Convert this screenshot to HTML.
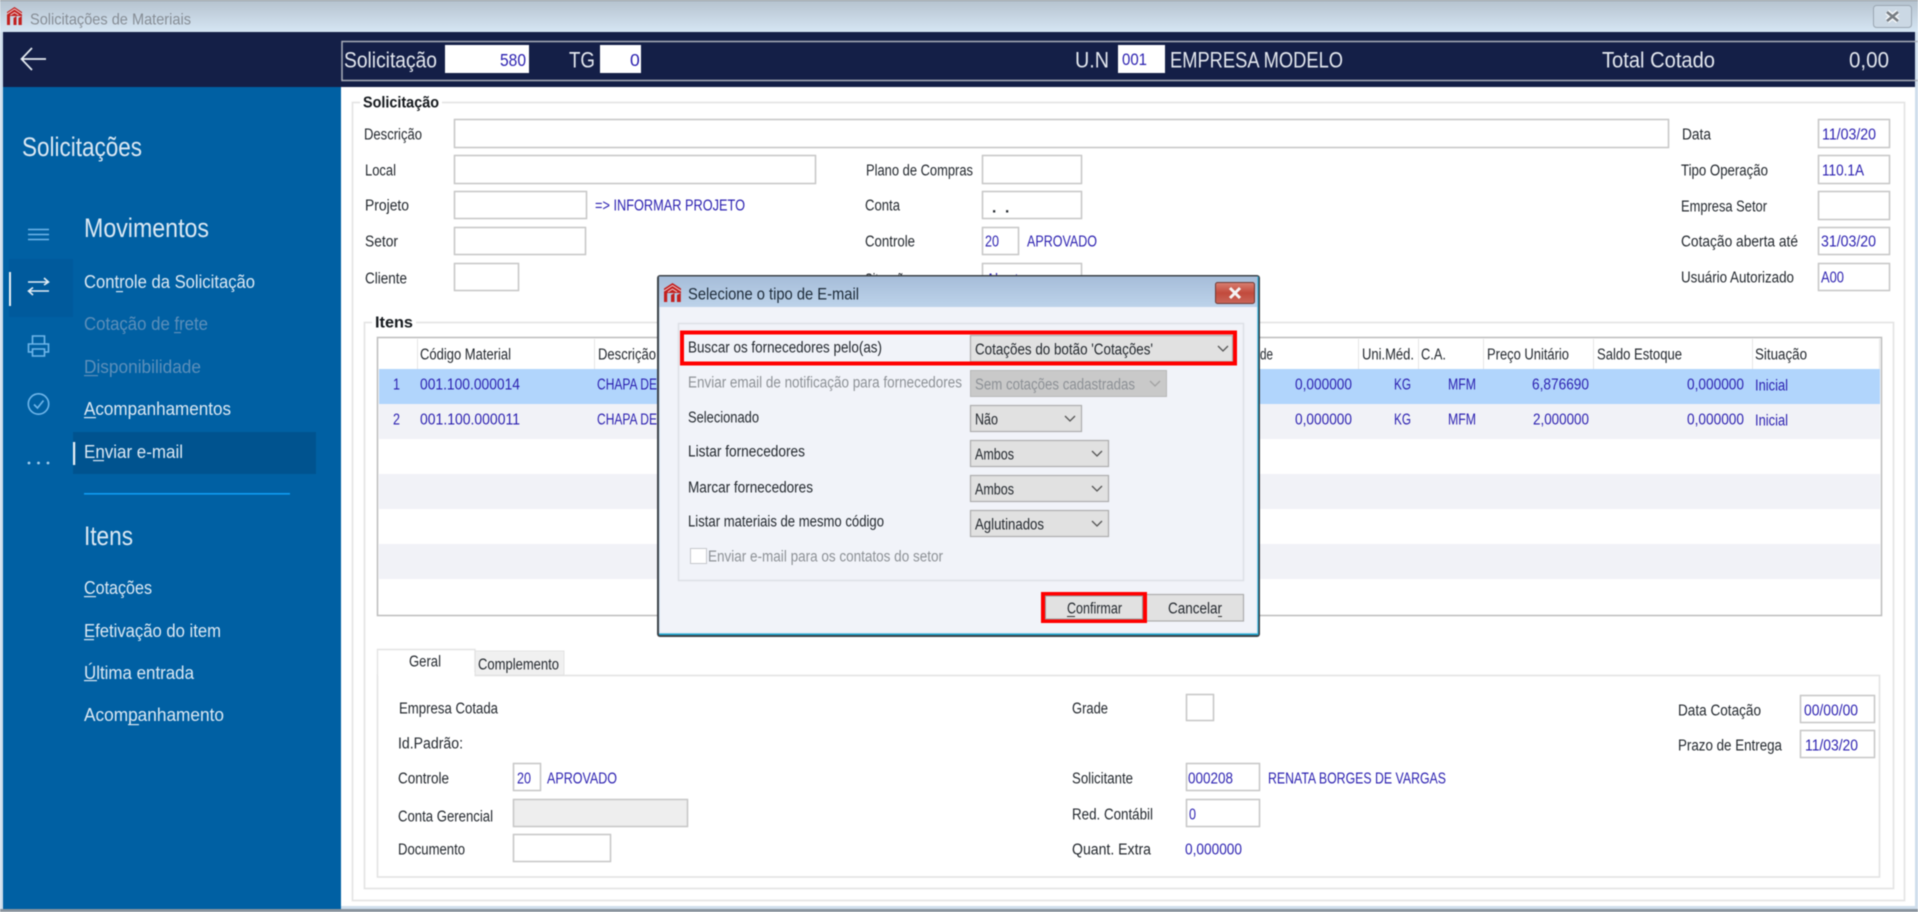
<!DOCTYPE html>
<html lang="pt-BR"><head><meta charset="utf-8"><title>Solicitações de Materiais</title>
<style>
html,body{margin:0;padding:0;background:#fff;width:1918px;height:912px;overflow:hidden}
svg{display:block;filter:blur(.45px)}
text{font-family:"Liberation Sans",sans-serif;font-size:15.5px;fill:#23282e;dominant-baseline:central;white-space:pre;transform:translateY(1px)}
.b{fill:#2a1fb0}
.s{fill:#dbe8f3;font-size:18px;transform:none}
.d{fill:#5c8fba;font-size:18px;transform:none}
.h{fill:#e3e7ee;font-size:22.5px;transform:none}
.n{transform:none}
.g{fill:#8d9196}
.i{fill:#fff;stroke:#c6c6c6;stroke-width:1.5}
.c{fill:#e1e1e1;stroke:#adadad;stroke-width:1.2}
.ch{fill:none;stroke:#555;stroke-width:1.3}
.bx{fill:none;stroke:#e3e3e3;stroke-width:1.6}
.v{fill:#e6e6e6}
.ic{fill:none;stroke:#6fb6ea;stroke-width:1.6}
.u{fill:#dbe8f3}
</style></head><body>
<svg width="1918" height="912" viewBox="0 0 1918 912" xmlns="http://www.w3.org/2000/svg">
<defs>
<linearGradient id="tb" x1="0" y1="0" x2="0" y2="1"><stop offset="0" stop-color="#b5c2ce"/><stop offset="1" stop-color="#d6e6f4"/></linearGradient>
<linearGradient id="dt" x1="0" y1="0" x2="0" y2="1"><stop offset="0" stop-color="#a6bdd9"/><stop offset="1" stop-color="#bdd3ea"/></linearGradient>
<linearGradient id="rd" x1="0" y1="0" x2="0" y2="1"><stop offset="0" stop-color="#d98072"/><stop offset=".5" stop-color="#c24a3c"/><stop offset="1" stop-color="#c9675a"/></linearGradient>
</defs>
<!-- window frame -->
<rect width="1918" height="912" fill="#cfdeec"/>
<rect width="1918" height="32" fill="url(#tb)"/>
<rect x="0" y="0" width="1918" height="1" fill="#8b939b"/>
<rect x="0" y="909" width="1918" height="3" fill="#8a949e"/>
<rect x="3" y="32" width="1912" height="874" fill="#fff"/>
<!-- title bar -->
<g transform="translate(7,7)"><path d="M0 5L7.5 0L15 5V9H0Z" fill="#c2201f"/><path d="M0 7L7.5 2L15 7M3.5 8L7.5 5.5L11.5 8" fill="none" stroke="#f0dada" stroke-width=".9"/><path d="M0 9H3V18H0Z" fill="#c2201f"/><path d="M6.5 11L9.5 9V18H6.5Z" fill="#c2201f"/><path d="M11.5 11L14.8 9V18H11.5Z" fill="#c2201f"/></g>
<text class="n" x="30" y="20" textLength="161" lengthAdjust="spacingAndGlyphs" style="fill:#868d95;font-size:16px">Solicitações de Materiais</text>
<rect x="1873.5" y="5.5" width="38" height="22" rx="3" fill="#cbd8e4" stroke="#9aa6b2"/>
<path d="M1887 12L1898 21M1898 12L1887 21" stroke="#f5f7f9" stroke-width="5.5"/>
<path d="M1887 12L1898 21M1898 12L1887 21" stroke="#777d83" stroke-width="2.6"/>
<!-- dark header -->
<rect x="3" y="32" width="1912" height="55" fill="#141f47"/>
<path d="M46 59H22M32 48L21.5 59L32 70" fill="none" stroke="#e6ecf2" stroke-width="1.7"/>
<rect x="342" y="41.5" width="1580" height="39" fill="none" stroke="#a8adb8" stroke-width="1.5"/>
<text class="h" x="344" y="60" textLength="93" lengthAdjust="spacingAndGlyphs">Solicitação</text>
<rect x="445" y="45" width="84" height="28" fill="#fff"/>
<text class="b n" x="500" y="60" textLength="26" lengthAdjust="spacingAndGlyphs" style="font-size:17.5px">580</text>
<text class="h" x="569" y="60" textLength="26" lengthAdjust="spacingAndGlyphs">TG</text>
<rect x="600" y="45" width="41" height="28" fill="#fff"/>
<text class="b n" x="630" y="60" style="font-size:17.5px">0</text>
<text class="h" x="1075" y="60" textLength="34" lengthAdjust="spacingAndGlyphs">U.N</text>
<rect x="1118" y="45" width="47" height="28" fill="#fff"/>
<text class="b n" x="1122" y="60" textLength="25" lengthAdjust="spacingAndGlyphs" style="font-size:16.5px">001</text>
<text class="h" x="1170" y="60" textLength="173" lengthAdjust="spacingAndGlyphs">EMPRESA MODELO</text>
<text class="h" x="1602" y="60" textLength="113" lengthAdjust="spacingAndGlyphs">Total Cotado</text>
<text class="h" x="1849" y="60" textLength="40" lengthAdjust="spacingAndGlyphs">0,00</text>
<!-- sidebar -->
<rect x="3" y="87" width="338" height="822" fill="#0060a3"/>
<rect x="9" y="259" width="64" height="58" fill="#005a9c"/>
<rect x="9" y="272" width="2" height="34" fill="#e8f0f6"/>
<rect x="73" y="432" width="243" height="42" fill="#00538f"/>
<rect x="73" y="442" width="2.2" height="23" fill="#e8f0f6"/>
<rect x="84" y="493" width="206" height="1.6" fill="#0f9cf2"/>
<text class="n" x="22" y="147" textLength="120" lengthAdjust="spacingAndGlyphs" style="fill:#dbe8f3;font-size:27px">Solicitações</text>
<text class="n" x="84" y="228" textLength="125" lengthAdjust="spacingAndGlyphs" style="fill:#dbe8f3;font-size:27px">Movimentos</text>
<text class="n" x="84" y="536" textLength="49" lengthAdjust="spacingAndGlyphs" style="fill:#dbe8f3;font-size:27px">Itens</text>
<text class="s" x="84" y="282" textLength="171" lengthAdjust="spacingAndGlyphs">Controle da Solicitação</text><rect class="u" x="116" y="291" width="7" height="1.2"/>
<text class="d" x="84" y="324" textLength="124" lengthAdjust="spacingAndGlyphs">Cotação de frete</text><rect x="174" y="332" width="7" height="1.2" fill="#5c8fba"/>
<text class="d" x="84" y="367" textLength="117" lengthAdjust="spacingAndGlyphs">Disponibilidade</text><rect x="84" y="375" width="14" height="1.2" fill="#5c8fba"/>
<text class="s" x="84" y="409" textLength="147" lengthAdjust="spacingAndGlyphs">Acompanhamentos</text><rect class="u" x="84" y="417" width="12" height="1.2"/>
<text class="s" x="84" y="452" textLength="99" lengthAdjust="spacingAndGlyphs">Enviar e-mail</text><rect class="u" x="93" y="460" width="11" height="1.2"/>
<text class="s" x="84" y="588" textLength="68" lengthAdjust="spacingAndGlyphs">Cotações</text><rect class="u" x="84" y="596" width="12" height="1.2"/>
<text class="s" x="84" y="631" textLength="137" lengthAdjust="spacingAndGlyphs">Efetivação do item</text><rect class="u" x="84" y="639" width="10" height="1.2"/>
<text class="s" x="84" y="673" textLength="110" lengthAdjust="spacingAndGlyphs">Última entrada</text><rect class="u" x="84" y="680" width="13" height="1.2"/>
<text class="s" x="84" y="715" textLength="140" lengthAdjust="spacingAndGlyphs">Acompanhamento</text><rect class="u" x="128" y="724" width="11" height="1.2"/>
<!-- sidebar icons -->
<path class="ic" d="M28 229.5H49M28 234.5H49M28 239.5H49" stroke-width="1.2"/>
<path class="ic" d="M28 282H48M44 278L48.5 282L44 285M49 291H29M33 287.5L28.5 291L33 295" style="stroke:#e3edf5"/>
<path class="ic" d="M32.5 344V336H44.5V344M32.5 352H28.5V344H48.5V352H44.5M32.5 349H44.5V356H32.5Z"/>
<circle class="ic" cx="38.5" cy="404" r="10.2"/><path class="ic" d="M34 404.5L37.5 408L43.5 400.5"/>
<circle cx="29" cy="463" r="1.4" fill="#a5cfee"/><circle cx="38.5" cy="463" r="1.4" fill="#a5cfee"/><circle cx="48" cy="463" r="1.4" fill="#a5cfee"/>
<!-- group Solicitação -->
<rect class="bx" x="352.5" y="102.5" width="1552" height="798"/>
<rect x="360" y="95" width="82" height="14" fill="#fff"/>
<text class="n" x="363" y="103" textLength="76" lengthAdjust="spacingAndGlyphs" style="font-weight:700;font-size:15.5px;fill:#14181c">Solicitação</text>
<text x="364" y="134" textLength="58" lengthAdjust="spacingAndGlyphs">Descrição</text><rect class="i" x="454.5" y="119.5" width="1214" height="28"/>
<text x="365" y="170" textLength="31" lengthAdjust="spacingAndGlyphs">Local</text><rect class="i" x="454.5" y="155.5" width="361" height="28"/>
<text x="365" y="205" textLength="44" lengthAdjust="spacingAndGlyphs">Projeto</text><rect class="i" x="454.5" y="191.5" width="132" height="27"/>
<text class="b" x="595" y="205" textLength="150" lengthAdjust="spacingAndGlyphs">=&gt; INFORMAR PROJETO</text>
<text x="365" y="241" textLength="33" lengthAdjust="spacingAndGlyphs">Setor</text><rect class="i" x="454.5" y="227.5" width="131" height="27"/>
<text x="365" y="278" textLength="42" lengthAdjust="spacingAndGlyphs">Cliente</text><rect class="i" x="454.5" y="263.5" width="64" height="27"/>
<text x="866" y="170" textLength="107" lengthAdjust="spacingAndGlyphs">Plano de Compras</text><rect class="i" x="982.5" y="155.5" width="99" height="28"/>
<text x="865" y="205" textLength="35" lengthAdjust="spacingAndGlyphs">Conta</text><rect class="i" x="982.5" y="191.5" width="99" height="27"/>
<text x="992" y="207" style="font-weight:700">.</text><text x="1005" y="207" style="font-weight:700">.</text>
<text x="865" y="241" textLength="50" lengthAdjust="spacingAndGlyphs">Controle</text><rect class="i" x="982.5" y="227.5" width="36" height="27"/>
<text class="b" x="985" y="241" textLength="14" lengthAdjust="spacingAndGlyphs">20</text>
<text class="b" x="1027" y="241" textLength="70" lengthAdjust="spacingAndGlyphs">APROVADO</text>
<text x="865" y="279" textLength="45" lengthAdjust="spacingAndGlyphs">Situação</text><rect class="i" x="982.5" y="263.5" width="99" height="27"/>
<text class="b" x="986" y="279" textLength="40" lengthAdjust="spacingAndGlyphs">Aberto</text>
<text x="1682" y="134" textLength="29" lengthAdjust="spacingAndGlyphs">Data</text><rect class="i" x="1818.5" y="119.5" width="71" height="28"/>
<text class="b" x="1822" y="134" textLength="54" lengthAdjust="spacingAndGlyphs">11/03/20</text>
<text x="1681" y="170" textLength="87" lengthAdjust="spacingAndGlyphs">Tipo Operação</text><rect class="i" x="1818.5" y="155.5" width="71" height="28"/>
<text class="b" x="1822" y="170" textLength="42" lengthAdjust="spacingAndGlyphs">110.1A</text>
<text x="1681" y="206" textLength="86" lengthAdjust="spacingAndGlyphs">Empresa Setor</text><rect class="i" x="1818.5" y="191.5" width="71" height="28"/>
<text x="1681" y="241" textLength="117" lengthAdjust="spacingAndGlyphs">Cotação aberta até</text><rect class="i" x="1818.5" y="227.5" width="71" height="27"/>
<text class="b" x="1821" y="241" textLength="55" lengthAdjust="spacingAndGlyphs">31/03/20</text>
<text x="1681" y="277" textLength="113" lengthAdjust="spacingAndGlyphs">Usuário Autorizado</text><rect class="i" x="1818.5" y="263.5" width="71" height="27"/>
<text class="b" x="1821" y="277" textLength="23" lengthAdjust="spacingAndGlyphs">A00</text>
<!-- group Itens -->
<rect class="bx" x="364.5" y="322.5" width="1529" height="566"/>
<rect x="372" y="315" width="44" height="14" fill="#fff"/>
<text class="n" x="375" y="323" textLength="38" lengthAdjust="spacingAndGlyphs" style="font-weight:700;font-size:15.5px;fill:#14181c">Itens</text>
<rect x="377.5" y="337.5" width="1504" height="278" fill="#fff" stroke="#bcbcbc" stroke-width="1.5"/>
<rect x="379" y="369" width="1501" height="35" fill="#b1d5fc"/>
<rect x="379" y="404" width="1501" height="35" fill="#f1f2f7"/>
<rect x="379" y="474" width="1501" height="35" fill="#f1f2f7"/>
<rect x="379" y="544" width="1501" height="35" fill="#f1f2f7"/>
<rect class="v" x="417" y="339" width="1" height="30"/><rect class="v" x="594" y="339" width="1" height="30"/>
<rect class="v" x="1358" y="339" width="1" height="30"/><rect class="v" x="1418" y="339" width="1" height="30"/><rect class="v" x="1483" y="339" width="1" height="30"/><rect class="v" x="1593" y="339" width="1" height="30"/><rect class="v" x="1752" y="339" width="1" height="30"/><rect class="v" x="1879" y="339" width="1" height="30"/>
<text x="420" y="354" textLength="91" lengthAdjust="spacingAndGlyphs">Código Material</text>
<text x="598" y="354" textLength="58" lengthAdjust="spacingAndGlyphs">Descrição</text>
<text x="1260" y="354" textLength="13" lengthAdjust="spacingAndGlyphs">de</text>
<text x="1362" y="354" textLength="52" lengthAdjust="spacingAndGlyphs">Uni.Méd.</text>
<text x="1421" y="354" textLength="25" lengthAdjust="spacingAndGlyphs">C.A.</text>
<text x="1487" y="354" textLength="82" lengthAdjust="spacingAndGlyphs">Preço Unitário</text>
<text x="1597" y="354" textLength="85" lengthAdjust="spacingAndGlyphs">Saldo Estoque</text>
<text x="1755" y="354" textLength="52" lengthAdjust="spacingAndGlyphs">Situação</text>
<text class="b" x="393" y="384" textLength="7" lengthAdjust="spacingAndGlyphs">1</text>
<text class="b" x="420" y="384" textLength="100" lengthAdjust="spacingAndGlyphs">001.100.000014</text>
<text class="b" x="597" y="384" textLength="60" lengthAdjust="spacingAndGlyphs">CHAPA DE</text>
<text class="b" x="1295" y="384" textLength="57" lengthAdjust="spacingAndGlyphs">0,000000</text>
<text class="b" x="1394" y="384" textLength="17" lengthAdjust="spacingAndGlyphs">KG</text>
<text class="b" x="1448" y="384" textLength="28" lengthAdjust="spacingAndGlyphs">MFM</text>
<text class="b" x="1532" y="384" textLength="57" lengthAdjust="spacingAndGlyphs">6,876690</text>
<text class="b" x="1687" y="384" textLength="57" lengthAdjust="spacingAndGlyphs">0,000000</text>
<text class="b" x="1755" y="385" textLength="33" lengthAdjust="spacingAndGlyphs">Inicial</text>
<text class="b" x="393" y="419" textLength="7" lengthAdjust="spacingAndGlyphs">2</text>
<text class="b" x="420" y="419" textLength="100" lengthAdjust="spacingAndGlyphs">001.100.000011</text>
<text class="b" x="597" y="419" textLength="60" lengthAdjust="spacingAndGlyphs">CHAPA DE</text>
<text class="b" x="1295" y="419" textLength="57" lengthAdjust="spacingAndGlyphs">0,000000</text>
<text class="b" x="1394" y="419" textLength="17" lengthAdjust="spacingAndGlyphs">KG</text>
<text class="b" x="1448" y="419" textLength="28" lengthAdjust="spacingAndGlyphs">MFM</text>
<text class="b" x="1533" y="419" textLength="56" lengthAdjust="spacingAndGlyphs">2,000000</text>
<text class="b" x="1687" y="419" textLength="57" lengthAdjust="spacingAndGlyphs">0,000000</text>
<text class="b" x="1755" y="420" textLength="33" lengthAdjust="spacingAndGlyphs">Inicial</text>
<!-- tabs -->
<rect class="bx" x="377.5" y="675.5" width="1502" height="201.5"/>
<rect x="475" y="651" width="89" height="24" fill="#f0f0f0" stroke="#e3e3e3"/>
<path d="M377.5 676V649.5H475V676" fill="#fff" stroke="#e3e3e3" stroke-width="1.4"/>
<rect x="378.5" y="672" width="96" height="6" fill="#fff"/>
<text x="409" y="661" textLength="32" lengthAdjust="spacingAndGlyphs">Geral</text>
<text x="478" y="664" textLength="81" lengthAdjust="spacingAndGlyphs">Complemento</text>
<text x="399" y="708" textLength="99" lengthAdjust="spacingAndGlyphs">Empresa Cotada</text>
<text x="398" y="743" textLength="65" lengthAdjust="spacingAndGlyphs">Id.Padrão:</text>
<text x="398" y="778" textLength="51" lengthAdjust="spacingAndGlyphs">Controle</text>
<rect class="i" x="513.5" y="763.5" width="27" height="27"/>
<text class="b" x="517" y="778" textLength="14" lengthAdjust="spacingAndGlyphs">20</text>
<text class="b" x="547" y="778" textLength="70" lengthAdjust="spacingAndGlyphs">APROVADO</text>
<text x="398" y="816" textLength="95" lengthAdjust="spacingAndGlyphs">Conta Gerencial</text>
<rect class="i" x="513.5" y="799.5" width="174" height="27" style="fill:#eee"/>
<text x="398" y="849" textLength="67" lengthAdjust="spacingAndGlyphs">Documento</text>
<rect class="i" x="513.5" y="834.5" width="97" height="27"/>
<text x="1072" y="708" textLength="36" lengthAdjust="spacingAndGlyphs">Grade</text>
<rect class="i" x="1186.5" y="694.5" width="27" height="26"/>
<text x="1072" y="778" textLength="61" lengthAdjust="spacingAndGlyphs">Solicitante</text>
<rect class="i" x="1186.5" y="763.5" width="73" height="27"/>
<text class="b" x="1188" y="778" textLength="45" lengthAdjust="spacingAndGlyphs">000208</text>
<text class="b" x="1268" y="778" textLength="178" lengthAdjust="spacingAndGlyphs">RENATA BORGES DE VARGAS</text>
<text x="1072" y="814" textLength="81" lengthAdjust="spacingAndGlyphs">Red. Contábil</text>
<rect class="i" x="1186.5" y="799.5" width="73" height="27"/>
<text class="b" x="1189" y="814" textLength="7" lengthAdjust="spacingAndGlyphs">0</text>
<text x="1072" y="849" textLength="79" lengthAdjust="spacingAndGlyphs">Quant. Extra</text>
<text class="b" x="1185" y="849" textLength="57" lengthAdjust="spacingAndGlyphs">0,000000</text>
<text x="1678" y="710" textLength="83" lengthAdjust="spacingAndGlyphs">Data Cotação</text>
<rect class="i" x="1800.5" y="695.5" width="74" height="27"/>
<text class="b" x="1804" y="710" textLength="54" lengthAdjust="spacingAndGlyphs">00/00/00</text>
<text x="1678" y="745" textLength="104" lengthAdjust="spacingAndGlyphs">Prazo de Entrega</text>
<rect class="i" x="1800.5" y="730.5" width="74" height="27"/>
<text class="b" x="1805" y="745" textLength="53" lengthAdjust="spacingAndGlyphs">11/03/20</text>
<!-- dialog -->
<rect x="657" y="275" width="603" height="362" rx="3" fill="#3c4248"/>
<rect x="659" y="276.5" width="599.5" height="358.5" fill="#1fa9d3"/>
<rect x="659" y="276.5" width="598.5" height="30.5" fill="url(#dt)"/>
<rect x="659" y="307" width="598.5" height="326.5" fill="#d4e4f2"/>
<rect x="660" y="307" width="596.5" height="325.5" fill="#f1f3f9"/>
<g transform="translate(664,283)"><path d="M0 5.5L8.5 0L17 5.5V10H0Z" fill="#c2201f"/><path d="M0 8L8.5 2.5L17 8M4 9L8.5 6L13 9" fill="none" stroke="#f0dada" stroke-width=".9"/><path d="M0 10H3.2V19H0Z" fill="#c2201f"/><path d="M7 12L10.5 10V19H7Z" fill="#c2201f"/><path d="M13 12L16.8 10V19H13Z" fill="#c2201f"/></g>
<text class="n" x="688" y="294" textLength="171" lengthAdjust="spacingAndGlyphs" style="font-size:17px;fill:#1c2a38">Selecione o tipo de E-mail</text>
<rect x="1215.5" y="282.5" width="39" height="21" rx="2" fill="url(#rd)" stroke="#6e3a35"/>
<path d="M1230 288L1240 298M1240 288L1230 298" stroke="#f4f4f4" stroke-width="3"/>
<rect x="678.5" y="323.5" width="565" height="257" fill="none" stroke="#dcdfe6" stroke-width="1.4"/>
<text x="688" y="347" textLength="194" lengthAdjust="spacingAndGlyphs">Buscar os fornecedores pelo(as)</text>
<rect class="c" x="970.5" y="335.5" width="262" height="26"/>
<text x="975" y="349" textLength="178" lengthAdjust="spacingAndGlyphs">Cotações do botão 'Cotações'</text>
<path class="ch" d="M1218 346L1223 351L1228 346"/>
<rect x="682" y="332.5" width="553" height="31" fill="none" stroke="#f00" stroke-width="4"/>
<text class="g" x="688" y="382" textLength="274" lengthAdjust="spacingAndGlyphs">Enviar email de notificação para fornecedores</text>
<rect x="970.5" y="370.5" width="196" height="26" fill="#c9c9c9" stroke="#b8b8b8"/>
<text class="g" x="975" y="384" textLength="160" lengthAdjust="spacingAndGlyphs">Sem cotações cadastradas</text>
<path d="M1150 381L1155 386L1160 381" fill="none" stroke="#a2a2a2" stroke-width="1.3"/>
<text x="688" y="417" textLength="71" lengthAdjust="spacingAndGlyphs">Selecionado</text>
<rect class="c" x="970.5" y="405.5" width="111" height="26"/>
<text x="975" y="419" textLength="23" lengthAdjust="spacingAndGlyphs">Não</text>
<path class="ch" d="M1065 416L1070 421L1075 416"/>
<text x="688" y="451" textLength="117" lengthAdjust="spacingAndGlyphs">Listar fornecedores</text>
<rect class="c" x="970.5" y="440.5" width="138" height="26"/>
<text x="975" y="454" textLength="39" lengthAdjust="spacingAndGlyphs">Ambos</text>
<path class="ch" d="M1092 451L1097 456L1102 451"/>
<text x="688" y="487" textLength="125" lengthAdjust="spacingAndGlyphs">Marcar fornecedores</text>
<rect class="c" x="970.5" y="475.5" width="138" height="26"/>
<text x="975" y="489" textLength="39" lengthAdjust="spacingAndGlyphs">Ambos</text>
<path class="ch" d="M1092 486L1097 491L1102 486"/>
<text x="688" y="521" textLength="196" lengthAdjust="spacingAndGlyphs">Listar materiais de mesmo código</text>
<rect class="c" x="970.5" y="510.5" width="138" height="26"/>
<text x="975" y="524" textLength="69" lengthAdjust="spacingAndGlyphs">Aglutinados</text>
<path class="ch" d="M1092 521L1097 526L1102 521"/>
<rect x="690.5" y="548.5" width="16" height="15" fill="#fff" stroke="#c5c7cc"/>
<text class="g" x="708" y="556" textLength="235" lengthAdjust="spacingAndGlyphs">Enviar e-mail para os contatos do setor</text>
<rect class="c" x="1146" y="594.5" width="97.5" height="26.5"/>
<text x="1168" y="608" textLength="54" lengthAdjust="spacingAndGlyphs">Cancelar</text><rect x="1218" y="616" width="4" height="1" fill="#333"/>
<rect x="1043" y="594" width="102" height="27" fill="#e1e1e1" stroke="#f00" stroke-width="4"/>
<rect x="1045.5" y="596" width="97" height="23" fill="#e1e1e1" stroke="#9a9a9a"/>
<text x="1067" y="608" textLength="55" lengthAdjust="spacingAndGlyphs">Confirmar</text><rect x="1067" y="616" width="8" height="1" fill="#333"/>
</svg>
</body></html>
